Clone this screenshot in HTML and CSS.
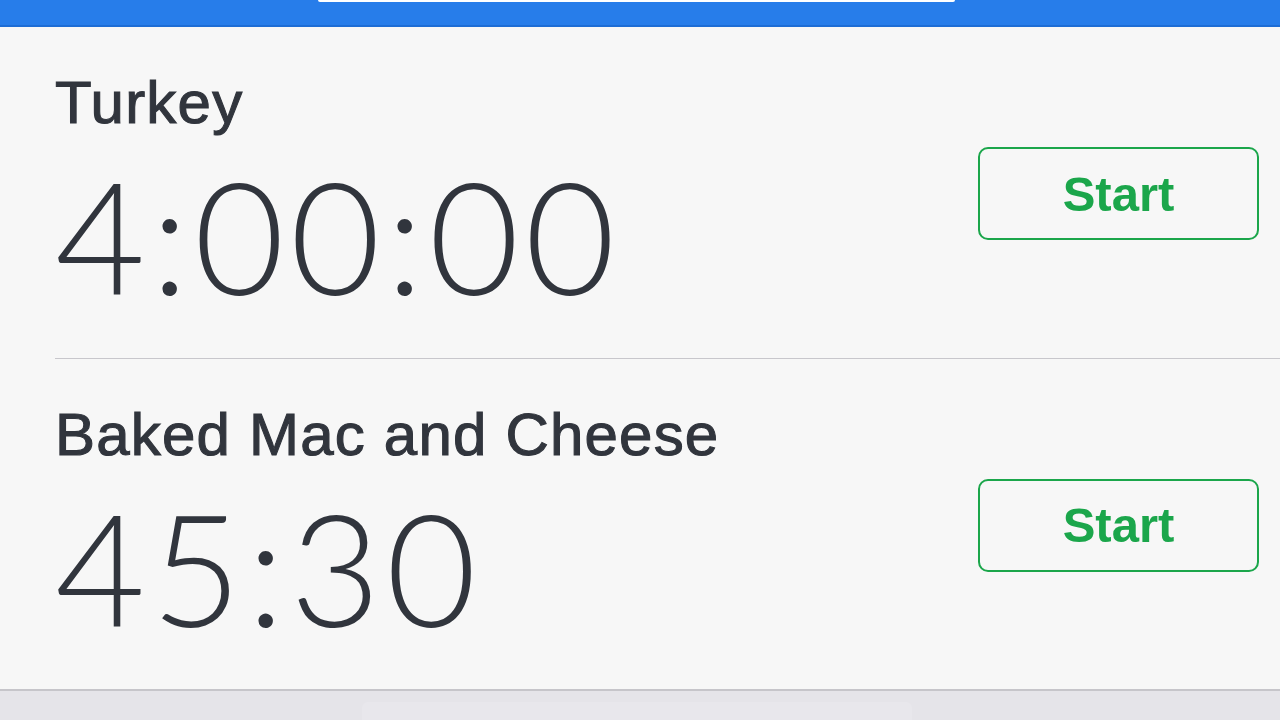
FILE: index.html
```html
<!DOCTYPE html>
<html lang="en">
<head>
    <meta charset="UTF-8">
    <meta name="viewport" content="width=device-width, initial-scale=1.0">
    <title>Timers</title>
    <link rel="stylesheet" href="styles.css">
</head>
<body>
    <!-- Top bar -->
    <header class="top-bar">
        <div class="search-pill"></div>
    </header>

    <!-- Timer list -->
    <main class="timer-list">
        <div class="timer-row">
            <div class="timer-info">
                <div class="timer-name">Turkey</div>
                <div class="timer-time">4:00:00</div>
            </div>
            <button class="start-btn">Start</button>
        </div>
        <div class="timer-row">
            <div class="timer-info">
                <div class="timer-name">Baked Mac and Cheese</div>
                <div class="timer-time">45:30</div>
            </div>
            <button class="start-btn">Start</button>
        </div>
    </main>

    <!-- Bottom toolbar -->
    <footer class="tool-bar">
        <div class="tool-tab"></div>
    </footer>
</body>
</html>
```
FILE: styles.css
```css
body {
    margin: 0;
    padding: 0;
    background: #f7f7f7;
    font-family: "Liberation Sans", Arial, sans-serif;
    color: #31353d;
    height: 720px;
    overflow: hidden;
    display: flex;
    flex-direction: column;
}

.top-bar {
    height: 25px;
    background: #277dea;
    border-bottom: 2px solid #1d6dd5;
    display: flex;
    justify-content: center;
    flex-shrink: 0;
}

.search-pill {
    width: 637px;
    height: 2px;
    margin-right: 7px;
    background: #ffffff;
    border-radius: 0 0 3px 3px;
}

.timer-list {
    padding-left: 55px;
    flex-shrink: 0;
}

.timer-row {
    display: flex;
    justify-content: space-between;
    align-items: center;
    padding: 41px 21px 39px 0;
    height: 331px;
    box-sizing: border-box;
}

.timer-row + .timer-row {
    border-top: 1px solid #c8c7cc;
}

.timer-info {
    display: flex;
    flex-direction: column;
    gap: 13px;
}

.timer-name {
    font-size: 60px;
    line-height: 69px;
    -webkit-text-stroke: 1.1px #31353d;
    letter-spacing: 1.2px;
}

.timer-time {
    font-family: Lato, sans-serif;
    font-weight: 300;
    font-size: 156px;
    line-height: 169px;
    letter-spacing: 5.5px;
}

.start-btn {
    width: 281px;
    height: 93px;
    background: transparent;
    border: 2px solid #1ba64b;
    border-radius: 10px;
    color: #1ba64b;
    font-family: "Liberation Sans", Arial, sans-serif;
    font-weight: 700;
    font-size: 49px;
    cursor: pointer;
}

.tool-bar {
    flex: 1;
    background: #e5e4e9;
    border-top: 2px solid #c6c5ca;
    display: flex;
    justify-content: center;
    align-items: flex-end;
}

.tool-tab {
    width: 550px;
    height: 18px;
    margin-right: 6px;
    background: #e8e7ec;
    border-radius: 6px 6px 0 0;
}
```
